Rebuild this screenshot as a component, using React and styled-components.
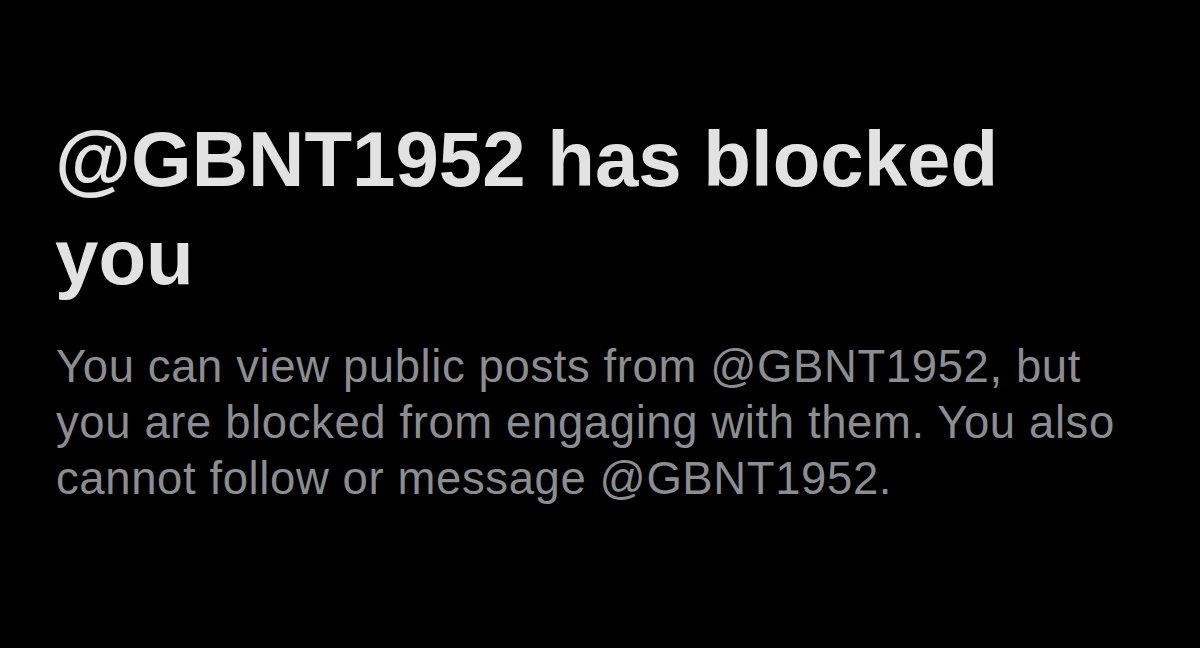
import React from "react";
import styled, { createGlobalStyle } from "styled-components";

const GlobalStyle = createGlobalStyle`
  html, body {
    margin: 0;
    padding: 0;
    background-color: #000000;
  }
`;

const Screen = styled.div`
  width: 1200px;
  height: 648px;
  background-color: #000000;
  display: flex;
  flex-direction: column;
  padding: 110px 0 0 55px;
  box-sizing: border-box;
  overflow: hidden;
`;

const Title = styled.h1`
  margin: 0;
  width: 1080px;
  font-family: "Liberation Sans", Arial, sans-serif;
  font-weight: 700;
  font-size: 78px;
  line-height: 98px;
  color: #e2e2e2;
`;

const Message = styled.p`
  margin: 33px 0 0 1px;
  font-family: "Liberation Sans", Arial, sans-serif;
  font-weight: 400;
  font-size: 45.5px;
  line-height: 56px;
  letter-spacing: 0.6px;
  color: #8a8d91;
`;

const Line = styled.span`
  display: block;
  white-space: nowrap;
`;

function BlockedNotice({ handle }) {
  return (
    <Screen>
      <Title>@{handle} has blocked you</Title>
      <Message>
        <Line>You can view public posts from @{handle}, but</Line>
        <Line>you are blocked from engaging with them. You also</Line>
        <Line>cannot follow or message @{handle}.</Line>
      </Message>
    </Screen>
  );
}

export default function App() {
  return (
    <>
      <GlobalStyle />
      <BlockedNotice handle="GBNT1952" />
    </>
  );
}
